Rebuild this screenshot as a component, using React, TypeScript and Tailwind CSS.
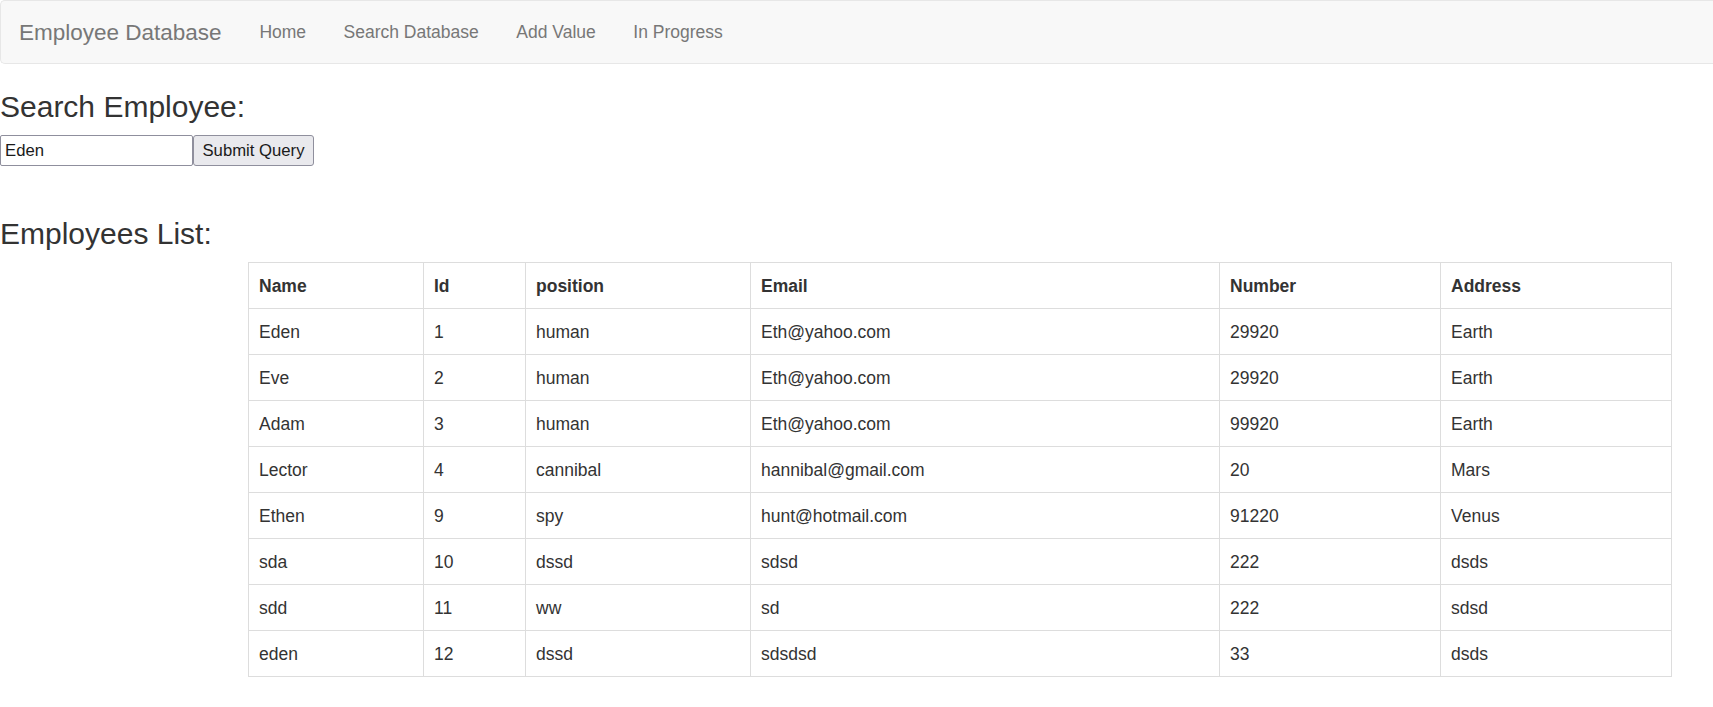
const navLinks = ["Home", "Search Database", "Add Value", "In Progress"];

const employees = [
  { name: "Eden", id: 1, position: "human", email: "Eth@yahoo.com", number: "29920", address: "Earth" },
  { name: "Eve", id: 2, position: "human", email: "Eth@yahoo.com", number: "29920", address: "Earth" },
  { name: "Adam", id: 3, position: "human", email: "Eth@yahoo.com", number: "99920", address: "Earth" },
  { name: "Lector", id: 4, position: "cannibal", email: "hannibal@gmail.com", number: "20", address: "Mars" },
  { name: "Ethen", id: 9, position: "spy", email: "hunt@hotmail.com", number: "91220", address: "Venus" },
  { name: "sda", id: 10, position: "dssd", email: "sdsd", number: "222", address: "dsds" },
  { name: "sdd", id: 11, position: "ww", email: "sd", number: "222", address: "sdsd" },
  { name: "eden", id: 12, position: "dssd", email: "sdsdsd", number: "33", address: "dsds" },
];

const columns = [
  { label: "Name", width: "w-[175px]" },
  { label: "Id", width: "w-[102px]" },
  { label: "position", width: "w-[225px]" },
  { label: "Email", width: "w-[469px]" },
  { label: "Number", width: "w-[221px]" },
  { label: "Address", width: "w-[231px]" },
];

const cell = "border border-[#dddddd] px-[10px] pt-[11px] pb-[9px] text-left align-top";

export default function App() {
  return (
    <div className="min-h-screen bg-white font-['Liberation_Sans',Arial,sans-serif] text-[17.5px] leading-[25px] text-[#333333]">
      {/* Navbar */}
      <nav className="flex h-[64px] items-center rounded-l-[5px] border border-r-0 border-[#e7e7e7] bg-[#f8f8f8]">
        <a className="pl-[18px] pr-[19px] text-[22.5px] leading-[25px] text-[#777777]">Employee Database</a>
        <ul className="flex items-center">
          {navLinks.map((link) => (
            <li key={link}>
              <a className="block px-[18.75px] text-[#777777]">{link}</a>
            </li>
          ))}
        </ul>
      </nav>

      {/* Search */}
      <h3 className="mt-[26px] mb-[12px] text-[30px] leading-[33px] font-medium">Search Employee:</h3>
      <form className="flex items-start" onSubmit={(e) => e.preventDefault()}>
        <input
          type="text"
          defaultValue="Eden"
          className="h-[31px] w-[193px] rounded-[2px] border border-[#8f8f9d] bg-white px-[4px] text-[16.7px] text-[#1a1a1a] outline-none"
        />
        <button
          type="submit"
          className="h-[31px] w-[121px] rounded-[3px] border border-[#8f8f9d] bg-[#e9e9ed] px-[6px] text-[16.7px] text-[#1a1a1a]"
        >
          Submit Query
        </button>
      </form>

      {/* List */}
      <h3 className="mt-[51px] mb-[12px] text-[30px] leading-[33px] font-medium">Employees List:</h3>
      <table className="ml-[248px] w-[1423px] table-fixed border-collapse border border-[#dddddd]">
        <thead>
          <tr>
            {columns.map((col) => (
              <th key={col.label} className={`${cell} ${col.width} font-bold`}>
                {col.label}
              </th>
            ))}
          </tr>
        </thead>
        <tbody>
          {employees.map((emp) => (
            <tr key={emp.id}>
              <td className={cell}>{emp.name}</td>
              <td className={cell}>{emp.id}</td>
              <td className={cell}>{emp.position}</td>
              <td className={cell}>{emp.email}</td>
              <td className={cell}>{emp.number}</td>
              <td className={cell}>{emp.address}</td>
            </tr>
          ))}
        </tbody>
      </table>
    </div>
  );
}
